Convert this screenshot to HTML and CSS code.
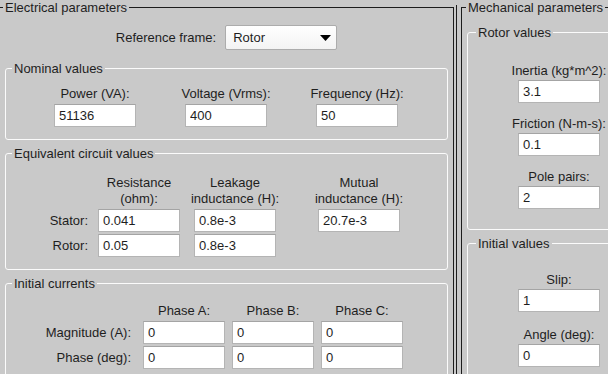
FILE: index.html
```html
<!DOCTYPE html>
<html lang="en">
<head>
  <meta charset="UTF-8">
  <title>Machine parameters</title>
  <link rel="stylesheet" href="styles.css">
</head>
<body>
  <div class="window">
    <fieldset class="frame electrical">
      <legend>Electrical parameters</legend>

      <div class="ref-row">
        <span>Reference frame:</span>
        <div class="dropdown">
          <span>Rotor</span>
          <svg width="11" height="6" viewBox="0 0 11 6"><path d="M0 0H11L5.5 6Z" fill="#000"/></svg>
        </div>
      </div>

      <fieldset class="panel nominal">
        <legend>Nominal values</legend>
        <div class="field-row">
          <label class="field"><span>Power (VA):</span><input type="text" value="51136"></label>
          <label class="field"><span>Voltage (Vrms):</span><input type="text" value="400"></label>
          <label class="field"><span>Frequency (Hz):</span><input type="text" value="50"></label>
        </div>
      </fieldset>

      <fieldset class="panel circuit">
        <legend>Equivalent circuit values</legend>
        <div class="circuit-grid">
          <span></span>
          <div class="col-head"><span>Resistance</span><span>(ohm):</span></div>
          <div class="col-head"><span>Leakage</span><span>inductance (H):</span></div>
          <div class="col-head"><span>Mutual</span><span>inductance (H):</span></div>

          <span class="row-label">Stator:</span>
          <input type="text" value="0.041">
          <input type="text" value="0.8e-3">
          <input type="text" value="20.7e-3">

          <span class="row-label">Rotor:</span>
          <input type="text" value="0.05">
          <input type="text" value="0.8e-3">
        </div>
      </fieldset>

      <fieldset class="panel currents">
        <legend>Initial currents</legend>
        <div class="currents-grid">
          <span></span>
          <span class="phase-head">Phase A:</span>
          <span class="phase-head">Phase B:</span>
          <span class="phase-head">Phase C:</span>

          <span class="row-label">Magnitude (A):</span>
          <input type="text" value="0">
          <input type="text" value="0">
          <input type="text" value="0">

          <span class="row-label">Phase (deg):</span>
          <input type="text" value="0">
          <input type="text" value="0">
          <input type="text" value="0">
        </div>
      </fieldset>
    </fieldset>

    <div class="divider"></div>

    <fieldset class="frame mechanical">
      <legend>Mechanical parameters</legend>

      <fieldset class="panel rotor">
        <legend>Rotor values</legend>
        <div class="field-stack">
          <label class="field"><span>Inertia (kg*m^2):</span><input type="text" value="3.1"></label>
          <label class="field"><span>Friction (N-m-s):</span><input type="text" value="0.1"></label>
          <label class="field"><span>Pole pairs:</span><input type="text" value="2"></label>
        </div>
      </fieldset>

      <fieldset class="panel initial">
        <legend>Initial values</legend>
        <div class="field-stack wide">
          <label class="field"><span>Slip:</span><input type="text" value="1"></label>
          <label class="field"><span>Angle (deg):</span><input type="text" value="0"></label>
        </div>
      </fieldset>
    </fieldset>
  </div>
</body>
</html>
```

FILE: styles.css
```css
/* Machine parameters dialog */
body {
  margin: 0;
  padding: 0;
  width: 608px;
  height: 374px;
  overflow: hidden;
  background-color: #c9c9c9;
  color: #1e1e1e;
  font-family: 'Liberation Sans', Arial, sans-serif;
  font-size: 13px;
}

.window {
  display: flex;
  align-items: flex-start;
}

fieldset {
  margin: 0;
  min-width: 0;
}

legend {
  font-size: 13px;
  line-height: 15px;
  padding: 0 2px;
}

/* dark outer frames */
.frame {
  border: 1px solid #1c1c1c;
  padding: 10px 5px 20px 6px;
  flex-shrink: 0;
}

.electrical {
  box-sizing: border-box;
  width: 456px;
  margin-left: -2px;
}

.electrical > legend {
  margin-left: -2px;
}

.mechanical {
  box-sizing: border-box;
  width: 200px;
  height: 420px;
  margin-left: 4px;
  padding-left: 5px;
}

.mechanical > legend {
  margin-left: -1px;
}

.divider {
  width: 1px;
  height: 380px;
  margin-top: 5px;
  margin-left: 2px;
  background-color: #1c1c1c;
  flex-shrink: 0;
}

/* white etched sub panels */
.panel {
  border: 1px solid #fbfbfb;
  border-radius: 3px;
  padding: 0;
}

.panel > legend {
  margin-left: 6px;
}

/* reference frame row */
.ref-row {
  display: flex;
  justify-content: center;
  align-items: center;
  gap: 9px;
  height: 25px;
}

.dropdown {
  box-sizing: border-box;
  width: 112px;
  height: 25px;
  display: flex;
  align-items: center;
  justify-content: space-between;
  padding: 0 5px 0 7px;
  background: linear-gradient(#ffffff, #f3f3f3);
  border: 1px solid #acacac;
  border-radius: 2px;
}

.dropdown svg {
  display: block;
}

/* inputs */
input {
  box-sizing: border-box;
  width: 82px;
  height: 23px;
  margin: 0;
  padding: 0 4px;
  border: 1px solid #b4b4b4;
  border-top-color: #a4a4a4;
  background-color: #fff;
  color: #1e1e1e;
  font-family: 'Liberation Sans', Arial, sans-serif;
  font-size: 13px;
  outline: none;
}

.field {
  width: 82px;
  display: flex;
  flex-direction: column;
  align-items: center;
  white-space: nowrap;
  line-height: 16px;
}

/* nominal values */
.nominal {
  margin-top: 11px;
  padding: 10px 0 12px;
}

.field-row {
  display: flex;
  gap: 49px;
  padding-left: 48px;
}

.field-row .field {
  gap: 2px;
}

/* equivalent circuit */
.circuit {
  margin-top: 6px;
  padding: 14px 0 12px;
}

.circuit-grid {
  display: grid;
  grid-template-columns: 92px 96px 124px 82px;
  row-gap: 2px;
}

.col-head {
  width: 82px;
  display: flex;
  flex-direction: column;
  align-items: center;
  white-space: nowrap;
  line-height: 16px;
}

.row-label {
  align-self: center;
  text-align: right;
  padding-right: 10px;
  white-space: nowrap;
}

/* initial currents */
.currents {
  margin-top: 6px;
  padding: 12px 0 14px;
}

.currents-grid {
  display: grid;
  grid-template-columns: 137px 89px 89px 82px;
  row-gap: 2px;
}

.currents-grid .row-label {
  padding-right: 12px;
}

.phase-head {
  width: 82px;
  text-align: center;
  line-height: 16px;
}

/* mechanical panels */
.mechanical .panel > legend {
  margin-left: 8px;
}

.rotor {
  padding: 23px 0 20px;
}

.initial {
  margin-top: 6px;
  padding: 21px 0 20px;
}

.field-stack {
  display: flex;
  flex-direction: column;
  gap: 13px;
  padding-left: 50px;
}

.field-stack.wide {
  gap: 15px;
}

.field-stack .field {
  gap: 1px;
}
```
